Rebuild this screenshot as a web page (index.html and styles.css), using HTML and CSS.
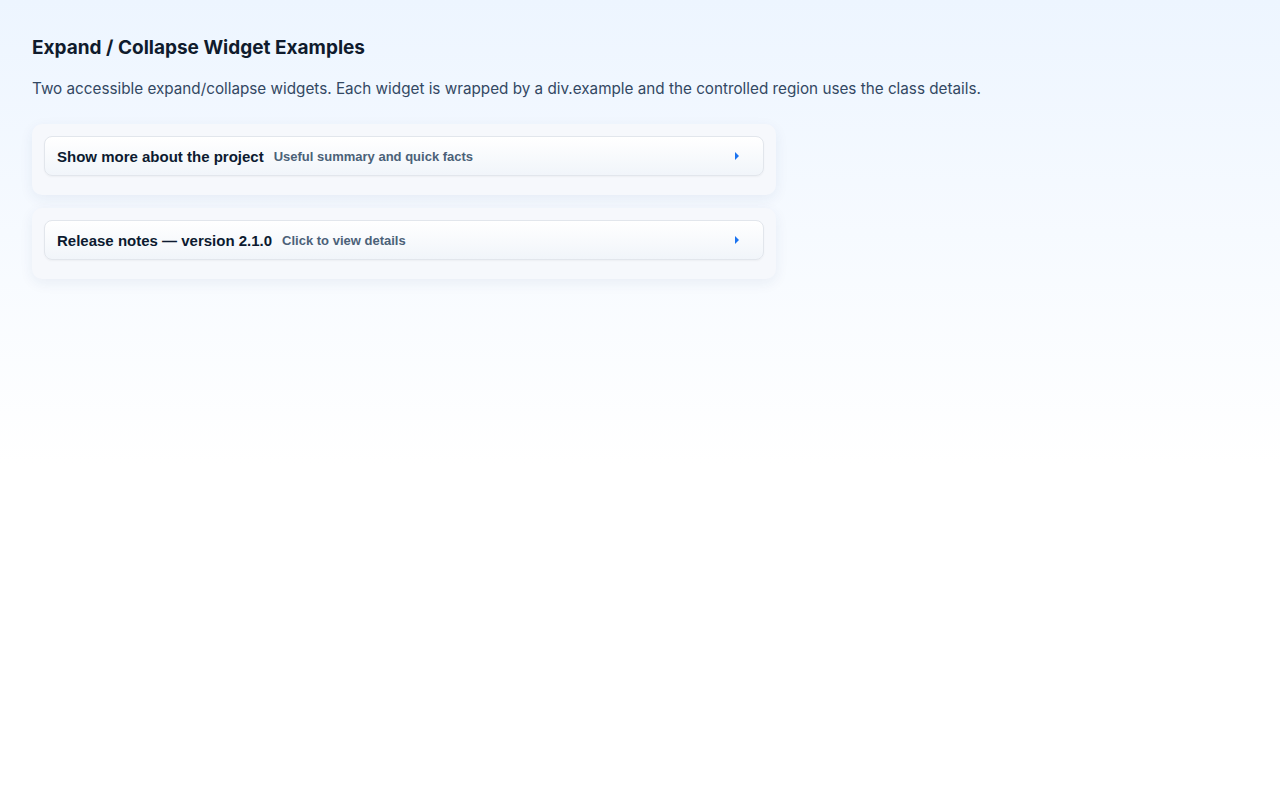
FILE: index.html
```html
<!DOCTYPE html>
<html lang="en">
<head>
    <meta charset="UTF-8">
    <meta name="viewport" content="width=device-width, initial-scale=1.0">
    <title>Expand / Collapse Widget Examples</title>
    <link rel="stylesheet" href="styles.css">
</head>
<body>
    <main class="page">
        <h1>Expand / Collapse Widget Examples</h1>
        <p class="intro">Two accessible expand/collapse widgets. Each widget is wrapped by a div.example and the controlled region uses the class details.</p>

        <div class="example">
            <button class="toggle" aria-expanded="false" aria-controls="details-project">
                <span class="toggle-title">Show more about the project</span>
                <span class="toggle-sub">Useful summary and quick facts</span>
                <span class="arrow" aria-hidden="true"></span>
            </button>
            <div class="details" id="details-project" hidden>
                <p>A small project showing an accessible disclosure pattern.</p>
            </div>
        </div>

        <div class="example">
            <button class="toggle" aria-expanded="false" aria-controls="details-release">
                <span class="toggle-title">Release notes — version 2.1.0</span>
                <span class="toggle-sub">Click to view details</span>
                <span class="arrow" aria-hidden="true"></span>
            </button>
            <div class="details" id="details-release" hidden>
                <p>Bug fixes and performance improvements.</p>
            </div>
        </div>
    </main>

    <script>
        document.querySelectorAll('.toggle').forEach(function(btn) {
            btn.addEventListener('click', function() {
                const open = btn.getAttribute('aria-expanded') === 'true';
                btn.setAttribute('aria-expanded', String(!open));
                document.getElementById(btn.getAttribute('aria-controls')).hidden = open;
            });
        });
    </script>
</body>
</html>
```

FILE: styles.css
```css
html, body {
    margin: 0;
    padding: 0;
}
body {
    font-family: Inter, "Noto Sans", sans-serif;
    color: #0f1b2d;
    min-height: 100vh;
    background: linear-gradient(180deg, #edf5ff 0%, #ffffff 58%);
}
.page {
    padding: 32px;
}
h1 {
    font-size: 19px;
    font-weight: 700;
    margin: 4px 0 18px;
    color: #0f1b2d;
}
.intro {
    font-size: 15.25px;
    color: #334863;
    margin: 0 0 23px;
    line-height: 24px;
}
.example {
    width: 720px;
    padding: 12px 12px 19px;
    margin-bottom: 13px;
    background: #f6f8fc;
    border-radius: 10px;
    box-shadow: 0 4px 14px rgba(30, 60, 110, 0.07);
}
.toggle {
    display: flex;
    align-items: center;
    width: 100%;
    height: 40px;
    padding: 0 12px;
    font-family: "Liberation Sans", Arial, sans-serif;
    background: linear-gradient(180deg, #ffffff 0%, #f1f5fa 100%);
    border: 1px solid #e2e6ec;
    border-radius: 8px;
    cursor: pointer;
    text-align: left;
    box-shadow: 0 1px 2px rgba(0, 0, 0, 0.04);
}
.toggle-title {
    font-size: 15px;
    font-weight: 700;
    color: #0c1a30;
}
.toggle-sub {
    font-size: 13px;
    font-weight: 700;
    color: #4b6178;
    margin-left: 10px;
}
.arrow {
    margin-left: auto;
    margin-right: 12px;
    width: 0;
    height: 0;
    border-top: 4px solid transparent;
    border-bottom: 4px solid transparent;
    border-left: 4px solid #1a73f0;
}
.toggle[aria-expanded="true"] .arrow {
    transform: rotate(90deg);
}
.details {
    padding: 12px;
    font-size: 14px;
    color: #334863;
}
```
